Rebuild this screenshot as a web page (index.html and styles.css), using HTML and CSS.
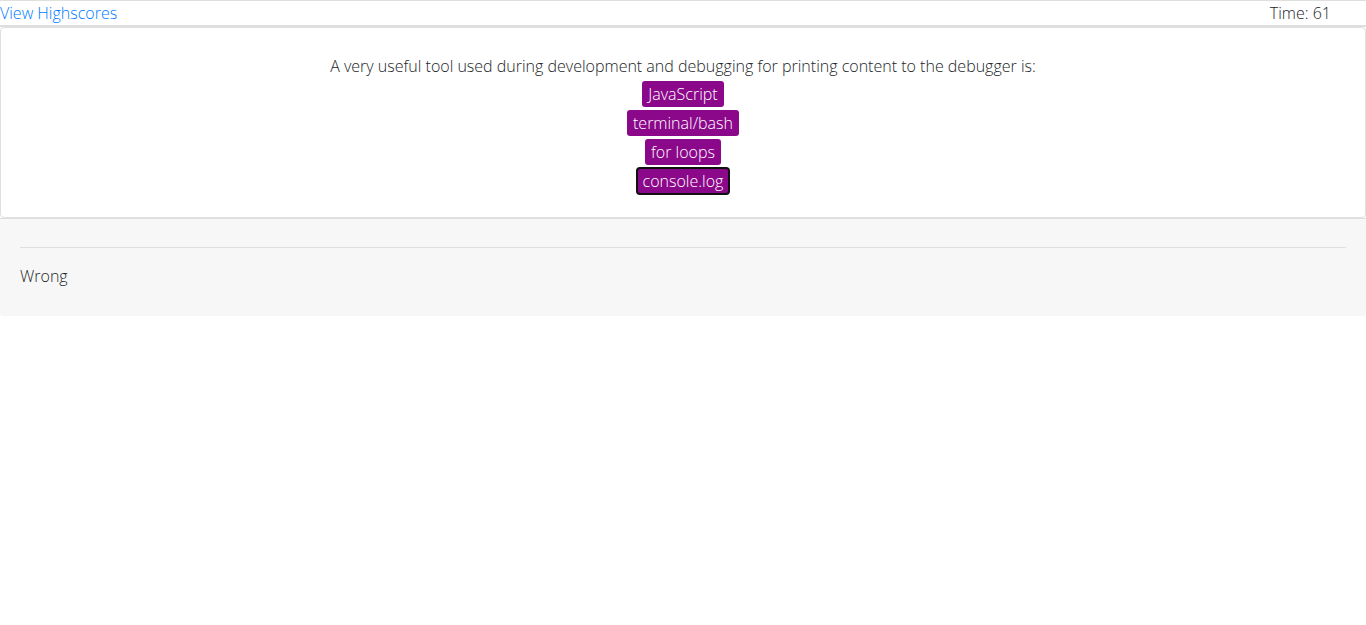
FILE: index.html
```html
<!DOCTYPE html>
<html lang="en">
<head>
<meta charset="utf-8">
<title>Code Quiz</title>
<link rel="stylesheet" href="styles.css">
</head>
<body>
<header class="topbar">
  <a class="scores" href="#">View Highscores</a>
  <div class="timer">Time: <span>61</span></div>
</header>
<main class="card">
  <div class="question">A very useful tool used during development and debugging for printing content to the debugger is:</div>
  <div class="choices">
    <button class="choice" type="button">JavaScript</button>
    <button class="choice" type="button">terminal/bash</button>
    <button class="choice" type="button">for loops</button>
    <button class="choice choice-active" type="button">console.log</button>
  </div>
</main>
<footer class="result">
  <hr class="rule">
  <p class="verdict">Wrong</p>
</footer>
</body>
</html>
```
FILE: styles.css
```css
* { box-sizing: border-box; }
body {
  margin: 0;
  background: #fff;
  color: #212529;
  font: 300 16px/24px "Segoe UI", "Open Sans", "Noto Sans", sans-serif;
}
.topbar {
  display: flex;
  justify-content: space-between;
  border-top: 1px solid #dfdfdf;
  border-bottom: 2px solid #dfdfdf;
  padding-right: 35px;
}
.scores { color: #007bff; text-decoration: none; }
.card {
  border: 1px solid #dfdfdf;
  border-radius: 4px;
  padding: 26px 20px 23px;
  text-align: center;
}
.choices {
  display: flex;
  flex-direction: column;
  align-items: center;
  gap: 3px;
  padding-top: 3px;
}
.choice {
  height: 26px;
  padding: 0 6px;
  border: 0;
  border-radius: 3px;
  background: #8b088b;
  color: #fff;
  font: inherit;
}
.choice-active { outline: 2px solid #101010; outline-offset: -1px; }
.result {
  border-top: 1px solid #dfdfdf;
  border-radius: 0 0 3px 3px;
  background: #f7f7f7;
  padding: 28px 20px;
}
.rule { margin: 0 0 16px; border: 0; border-top: 1px solid #dfdfdf; }
.verdict { margin: 0; }
```
